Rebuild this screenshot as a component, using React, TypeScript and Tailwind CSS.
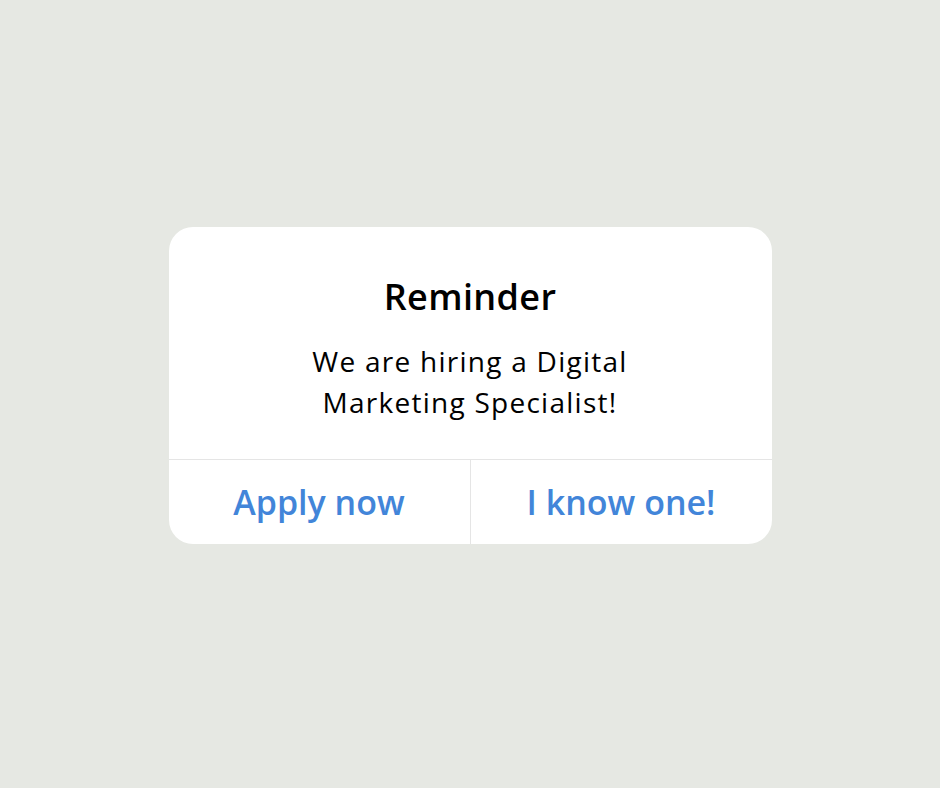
export default function App() {
  return (
    <div className="min-h-screen w-full bg-[#e6e8e3] flex items-center justify-center pb-[17px]" style={{ fontFamily: '"Open Sans", Lato, sans-serif' }}>
      <div className="w-[603px] h-[317px] bg-white rounded-[24px] flex flex-col overflow-hidden">
        <div className="flex-1 flex flex-col items-center pt-[50px]">
          <h2 className="text-[36px] font-semibold text-black leading-[40px] tracking-[0.01em]">Reminder</h2>
          <p className="mt-[24px] text-[28px] text-black text-center leading-[41px] tracking-[0.045em] w-[380px]">
            We are hiring a Digital Marketing Specialist!
          </p>
        </div>
        <div className="h-[85px] border-t border-[#e5e5e5] flex">
          <button className="flex-1 flex items-center justify-center text-[34px] font-semibold text-[#4285d9] border-r border-[#e5e5e5]">
            Apply now
          </button>
          <button className="flex-1 flex items-center justify-center text-[34px] font-semibold text-[#4285d9]">
            I know one!
          </button>
        </div>
      </div>
    </div>
  );
}
